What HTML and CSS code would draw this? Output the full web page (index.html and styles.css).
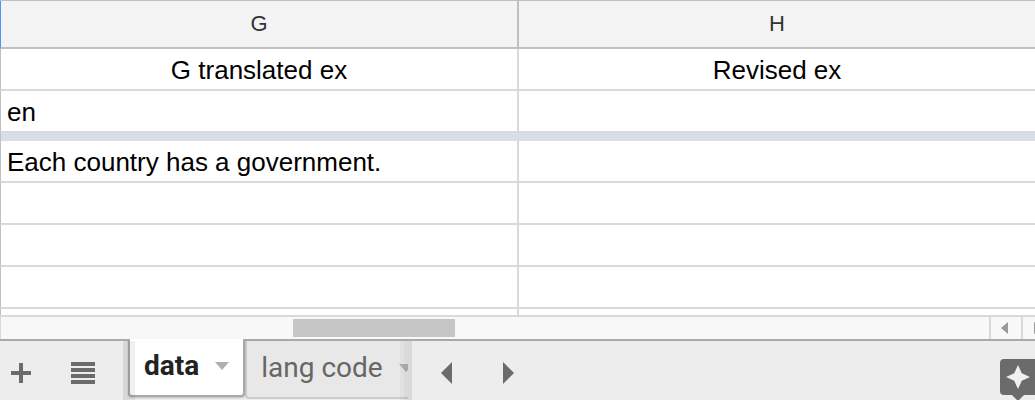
FILE: index.html
```html
<!DOCTYPE html>
<html lang="en">
<head>
<meta charset="utf-8">
<meta name="viewport" content="width=device-width, initial-scale=1">
<title>Spreadsheet</title>
<link rel="stylesheet" href="styles.css">
</head>
<body>
<main class="sheet">
  <div class="grid">
    <table class="cells">
      <colgroup><col class="col-fixed"><col></colgroup>
      <thead>
        <tr><th scope="col">G</th><th scope="col">H</th></tr>
      </thead>
      <tbody class="frozen">
        <tr class="titles"><td>G translated ex</td><td>Revised ex</td></tr>
        <tr><td>en</td><td></td></tr>
        <tr class="freeze-bar"><td colspan="2"></td></tr>
      </tbody>
      <tbody>
        <tr><td>Each country has a government.</td><td></td></tr>
        <tr><td></td><td></td></tr>
        <tr><td></td><td></td></tr>
        <tr><td></td><td></td></tr>
        <tr><td></td><td></td></tr>
      </tbody>
    </table>
  </div>
  <div class="scrollbar">
    <div class="track"><div class="thumb"></div></div>
    <button class="scroll-btn" type="button" aria-label="Scroll left">
      <svg width="7" height="12" viewBox="0 0 7 12"><path d="M7 0v12L0 6z" fill="#999"/></svg>
    </button>
    <button class="scroll-btn scroll-next" type="button" aria-label="Scroll right">
      <svg width="7" height="12" viewBox="0 0 7 12"><path d="M0 0v12l7-6z" fill="#999"/></svg>
    </button>
  </div>
  <footer class="bar">
    <div class="tools">
      <button class="tool" type="button" aria-label="Add sheet">
        <svg width="20" height="20" viewBox="0 0 20 20"><path d="M8 0h4v8h8v4h-8v8H8v-8H0V8h8z" fill="#6b6b6b"/></svg>
      </button>
      <button class="tool" type="button" aria-label="All sheets">
        <svg width="24" height="22" viewBox="0 0 24 22"><path d="M0 0h24v4H0zM0 6h24v4H0zM0 12h24v4H0zM0 18h24v4H0z" fill="#6b6b6b"/></svg>
      </button>
    </div>
    <div class="tabs">
      <button class="tab active" type="button">data
        <svg width="14" height="8" viewBox="0 0 14 8"><path d="M0 0h14L7 8z" fill="#b0b0b0"/></svg>
      </button>
      <button class="tab" type="button">lang code
        <svg width="14" height="8" viewBox="0 0 14 8"><path d="M0 0h14L7 8z" fill="#b0b0b0"/></svg>
      </button>
    </div>
    <div class="steps">
      <button class="step" type="button" aria-label="Previous tabs">
        <svg width="11" height="22" viewBox="0 0 11 22"><path d="M11 0v22L0 11z" fill="#6b6b6b"/></svg>
      </button>
      <button class="step" type="button" aria-label="Next tabs">
        <svg width="11" height="22" viewBox="0 0 11 22"><path d="M0 0v22l11-11z" fill="#6b6b6b"/></svg>
      </button>
    </div>
    <button class="explore" type="button" aria-label="Explore">
      <svg width="35" height="41" viewBox="0 0 35 41"><path d="M4 0h31v36H24l-6 6-6-6H4q-4 0-4-4V4q0-4 4-4z" fill="#6b6b6b"/><path d="M18 6l3.8 8.2L30 18l-8.2 3.8L18 30l-3.8-8.2L6 18l8.2-3.8z" fill="#f0f0f0"/></svg>
    </button>
  </footer>
</main>
</body>
</html>
```
FILE: styles.css
```css
* { box-sizing: border-box; }
body { margin: 0; background: #fff; font-family: "Liberation Sans", Arial, sans-serif; }
button { border: 0; padding: 0; margin: 0; background: none; color: inherit; font: inherit; cursor: pointer; }
svg { display: block; flex: none; }

.sheet { display: flex; flex-direction: column; height: 100vh; overflow: hidden; }

.grid { flex: 1; min-height: 0; overflow: hidden; border-top: 1px solid #c0c0c0; }
.cells { width: 100%; table-layout: fixed; border-collapse: separate; border-spacing: 0; }
.col-fixed { width: 519px; }
.cells th {
  height: 48px; padding: 0; background: #f3f3f3; color: #333;
  border-right: 2px solid #c0c0c0; border-bottom: 2px solid #c0c0c0;
  font-weight: 400; font-size: 22px; line-height: 44px;
}
.cells th:first-child { border-left: 1px solid #4d90fe; }
.cells td {
  height: 42px; padding: 2px 6px 0; color: #000;
  border-right: 2px solid #d9d9d9; border-bottom: 2px solid #d9d9d9;
  font-size: 26px; line-height: 38px; white-space: nowrap;
}
.cells td:first-child { border-left: 1px solid #c0c0c0; }
.cells th:last-child, .cells td:last-child { border-right: 0; }
.titles td { text-align: center; }
.cells .freeze-bar td { height: 8px; padding: 0; border-bottom: 0; background: #d9dde6; line-height: 0; }

.scrollbar {
  flex: none; display: flex; height: 24px; background: #f8f8f8;
  border-top: 2px solid #d9d9d9; border-left: 1px solid #d9d9d9;
}
.track { flex: 1; padding: 2px 0 2px 292px; }
.thumb { width: 162px; height: 18px; background: #c6c6c6; }
.scroll-btn { display: flex; align-items: center; width: 32px; padding-left: 10px; border-left: 2px solid #d9d9d9; }
.scroll-next { width: 14px; padding-left: 11px; overflow: hidden; }

.bar { flex: none; display: flex; height: 61px; background: #ededed; border-top: 2px solid #a9a9a9; }
.tools { display: flex; align-items: center; gap: 40px; width: 123px; padding: 5px 0 0 11px; }
.tabs { position: relative; display: flex; align-items: flex-start; width: 289px; margin-top: -2px; padding-left: 5px; overflow: hidden; }
.tabs::before, .tabs::after { content: ""; position: absolute; top: 2px; bottom: 0; width: 12px; z-index: 2; }
.tabs::before { left: 0; background: linear-gradient(90deg, rgba(0, 0, 0, .09) 50%, rgba(0, 0, 0, .06) 50%); }
.tabs::after { right: 0; background: linear-gradient(90deg, rgba(0, 0, 0, .03) 33%, rgba(0, 0, 0, .06) 33%, rgba(0, 0, 0, .06) 66%, #dadada 66%); }
.tab {
  flex: none; display: flex; align-items: center; gap: 16px; height: 58px; margin-top: 2px; padding: 0 14px 2px;
  background: #e8e8e8; color: #666; border: 2px solid #ccc; border-top: 0; border-radius: 0 0 4px 4px;
  font: 400 28px/32px Roboto, sans-serif; white-space: nowrap;
}
.tab.active {
  position: relative; z-index: 1; margin-top: 0;
  background: #fff; color: #222; border-color: #a9a9a9; font-weight: 700;
  box-shadow: 0 1px 2px rgba(0, 0, 0, .2);
}
.steps { display: flex; align-items: center; gap: 51px; padding: 5px 0 0 29px; }
.explore { margin-left: auto; align-self: flex-start; padding-top: 18px; }
```
